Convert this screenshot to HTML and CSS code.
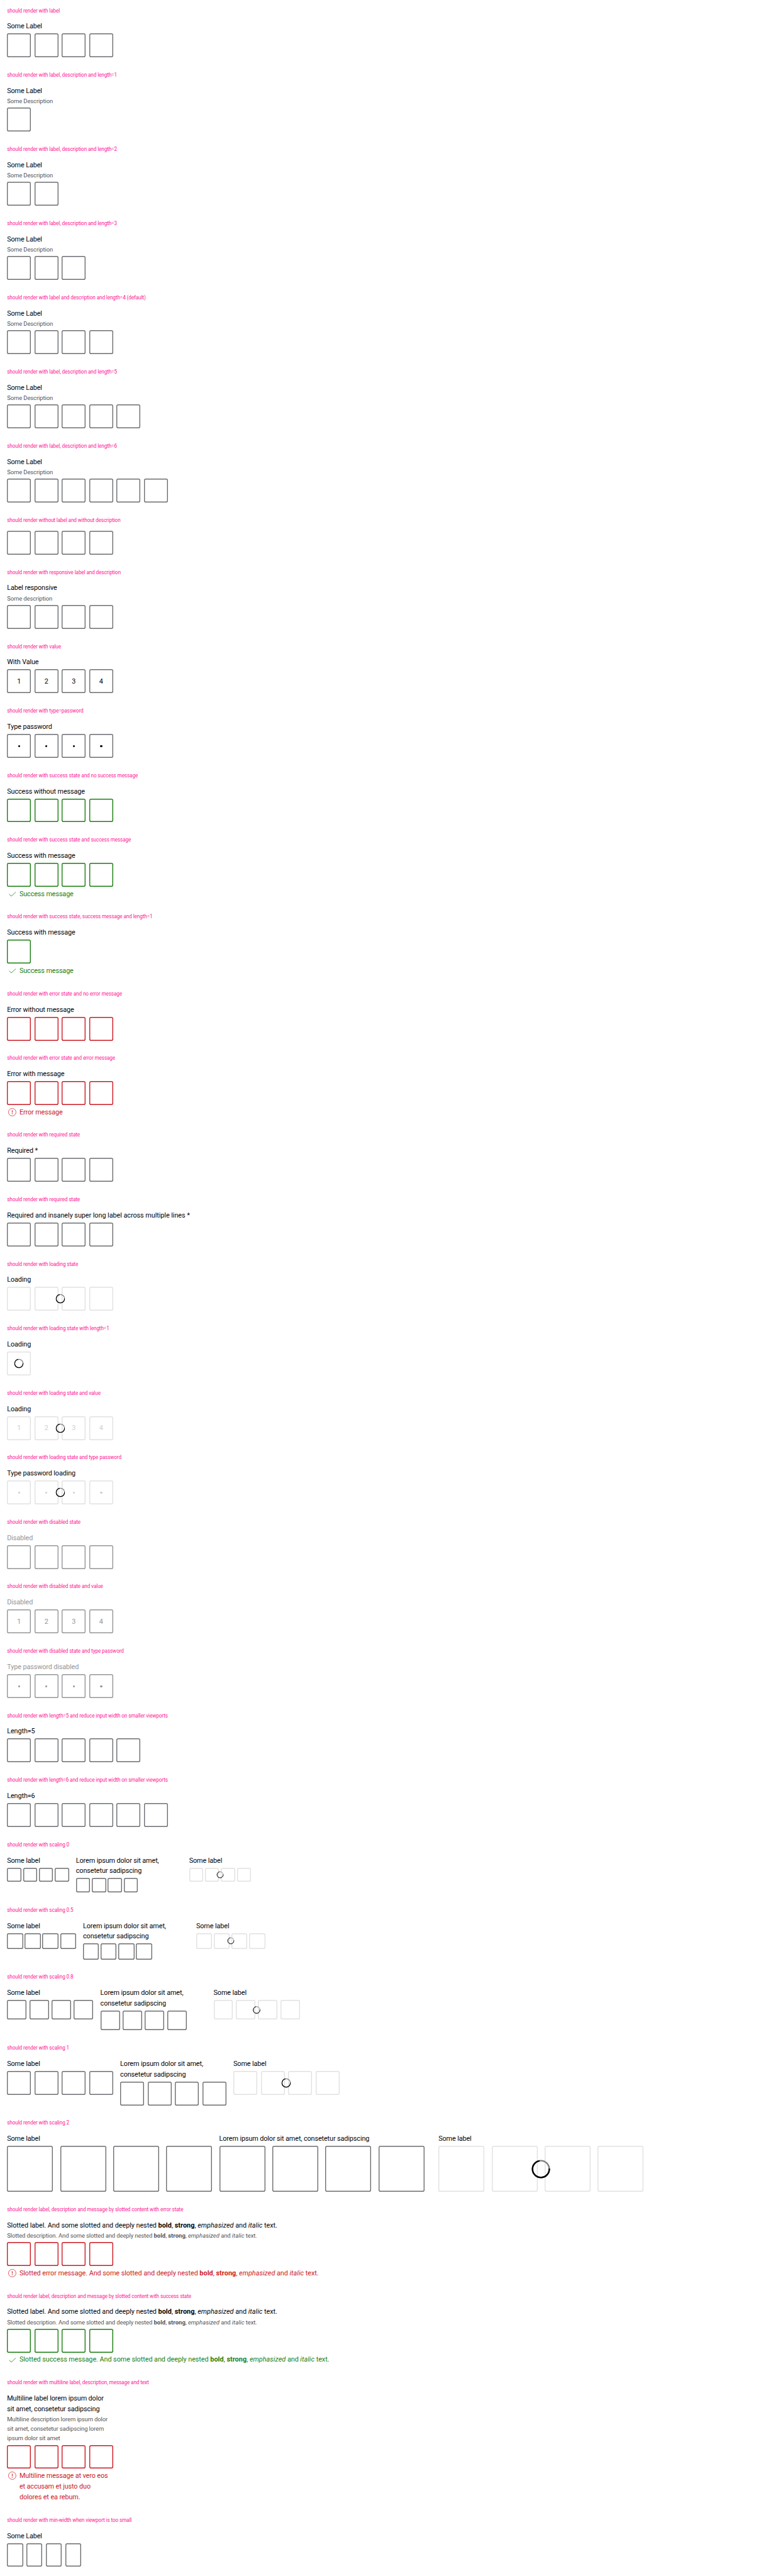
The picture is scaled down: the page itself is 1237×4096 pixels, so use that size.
FILE: index.html
```
<!DOCTYPE html>
<html lang="en">
<head>
<meta charset="utf-8">
<title>Pin code</title>
<link rel="stylesheet" href="styles.css">
</head>
<body>
<svg class="defs" width="0" height="0">
  <symbol id="check" viewBox="0 0 24 24"><path d="M5 12.4 10 17 20 7.8" fill="none" stroke="currentColor" stroke-width="1.1"/></symbol>
  <symbol id="alert" viewBox="0 0 24 24"><circle cx="12" cy="12" r="8.5" fill="none" stroke="currentColor"/><path d="M11.1 7.7h1.8l-.3 5.6h-1.2zM11.1 14.6h1.8v1.8h-1.8z" fill="currentColor"/></symbol>
  <symbol id="spinner" viewBox="0 0 48 48"><circle cx="24" cy="24" r="19" fill="none" stroke="#7e7f82" stroke-width="3.4"/><path d="M42.95 22.67A19 19 0 1 1 21.03 5.23" fill="none" stroke="#010205" stroke-width="3.4"/></symbol>
</svg>
<main class="page">
<section><h2>should render with label</h2><p class="label">Some Label</p><div class="pins"><i></i><i></i><i></i><i></i></div></section>
<section><h2>should render with label, description and length=1</h2><p class="label">Some Label</p><p class="desc">Some Description</p><div class="pins"><i></i></div></section>
<section><h2>should render with label, description and length=2</h2><p class="label">Some Label</p><p class="desc">Some Description</p><div class="pins"><i></i><i></i></div></section>
<section><h2>should render with label, description and length=3</h2><p class="label">Some Label</p><p class="desc">Some Description</p><div class="pins"><i></i><i></i><i></i></div></section>
<section><h2>should render with label and description and length=4 (default)</h2><p class="label">Some Label</p><p class="desc">Some Description</p><div class="pins"><i></i><i></i><i></i><i></i></div></section>
<section><h2>should render with label, description and length=5</h2><p class="label">Some Label</p><p class="desc">Some Description</p><div class="pins"><i></i><i></i><i></i><i></i><i></i></div></section>
<section><h2>should render with label, description and length=6</h2><p class="label">Some Label</p><p class="desc">Some Description</p><div class="pins"><i></i><i></i><i></i><i></i><i></i><i></i></div></section>
<section><h2>should render without label and without description</h2><div class="pins bare"><i></i><i></i><i></i><i></i></div></section>
<section><h2>should render with responsive label and description</h2><p class="label">Label responsive</p><p class="desc">Some description</p><div class="pins"><i></i><i></i><i></i><i></i></div></section>
<section><h2>should render with value</h2><p class="label">With Value</p><div class="pins"><i>1</i><i>2</i><i>3</i><i>4</i></div></section>
<section><h2>should render with type=password</h2><p class="label">Type password</p><div class="pins"><i><b></b></i><i><b></b></i><i><b></b></i><i><b></b></i></div></section>
<section class="success"><h2>should render with success state and no success message</h2><p class="label">Success without message</p><div class="pins"><i></i><i></i><i></i><i></i></div></section>
<section class="success"><h2>should render with success state and success message</h2><p class="label">Success with message</p><div class="pins"><i></i><i></i><i></i><i></i></div><div class="message"><svg><use href="#check"/></svg><span>Success message</span></div></section>
<section class="success"><h2>should render with success state, success message and length=1</h2><p class="label">Success with message</p><div class="pins"><i></i></div><div class="message"><svg><use href="#check"/></svg><span>Success message</span></div></section>
<section class="error"><h2>should render with error state and no error message</h2><p class="label">Error without message</p><div class="pins"><i></i><i></i><i></i><i></i></div></section>
<section class="error"><h2>should render with error state and error message</h2><p class="label">Error with message</p><div class="pins"><i></i><i></i><i></i><i></i></div><div class="message"><svg><use href="#alert"/></svg><span>Error message</span></div></section>
<section><h2>should render with required state</h2><p class="label">Required *</p><div class="pins"><i></i><i></i><i></i><i></i></div></section>
<section><h2>should render with required state</h2><p class="label long">Required and insanely super long label across multiple lines *</p><div class="pins"><i></i><i></i><i></i><i></i></div></section>
<section class="loading"><h2>should render with loading state</h2><p class="label">Loading</p><div class="pins"><i></i><i></i><i></i><i></i><svg class="spinner"><use href="#spinner"/></svg></div></section>
<section class="loading"><h2>should render with loading state with length=1</h2><p class="label">Loading</p><div class="pins"><i></i><svg class="spinner"><use href="#spinner"/></svg></div></section>
<section class="loading"><h2>should render with loading state and value</h2><p class="label">Loading</p><div class="pins"><i>1</i><i>2</i><i>3</i><i>4</i><svg class="spinner"><use href="#spinner"/></svg></div></section>
<section class="loading"><h2>should render with loading state and type password</h2><p class="label">Type password loading</p><div class="pins"><i><b></b></i><i><b></b></i><i><b></b></i><i><b></b></i><svg class="spinner"><use href="#spinner"/></svg></div></section>
<section class="disabled"><h2>should render with disabled state</h2><p class="label">Disabled</p><div class="pins"><i></i><i></i><i></i><i></i></div></section>
<section class="disabled"><h2>should render with disabled state and value</h2><p class="label">Disabled</p><div class="pins"><i>1</i><i>2</i><i>3</i><i>4</i></div></section>
<section class="disabled"><h2>should render with disabled state and type password</h2><p class="label">Type password disabled</p><div class="pins"><i><b></b></i><i><b></b></i><i><b></b></i><i><b></b></i></div></section>
<section><h2>should render with length=5 and reduce input width on smaller viewports</h2><p class="label">Length=5</p><div class="pins"><i></i><i></i><i></i><i></i><i></i></div></section>
<section><h2>should render with length=6 and reduce input width on smaller viewports</h2><p class="label">Length=6</p><div class="pins"><i></i><i></i><i></i><i></i><i></i><i></i></div></section>
<section><h2>should render with scaling 0</h2>
  <div class="row scale-0">
    <div><p class="label">Some label</p><div class="pins"><i></i><i></i><i></i><i></i></div></div>
    <div class="wide"><p class="label">Lorem ipsum dolor sit amet,<br>consetetur sadipscing</p><div class="pins"><i></i><i></i><i></i><i></i></div></div>
    <div class="loading"><p class="label">Some label</p><div class="pins"><i></i><i></i><i></i><i></i><svg class="spinner"><use href="#spinner"/></svg></div></div>
  </div></section>
<section><h2>should render with scaling 0.5</h2>
  <div class="row scale-05">
    <div><p class="label">Some label</p><div class="pins"><i></i><i></i><i></i><i></i></div></div>
    <div class="wide"><p class="label">Lorem ipsum dolor sit amet,<br>consetetur sadipscing</p><div class="pins"><i></i><i></i><i></i><i></i></div></div>
    <div class="loading"><p class="label">Some label</p><div class="pins"><i></i><i></i><i></i><i></i><svg class="spinner"><use href="#spinner"/></svg></div></div>
  </div></section>
<section><h2>should render with scaling 0.8</h2>
  <div class="row scale-08">
    <div><p class="label">Some label</p><div class="pins"><i></i><i></i><i></i><i></i></div></div>
    <div class="wide"><p class="label">Lorem ipsum dolor sit amet,<br>consetetur sadipscing</p><div class="pins"><i></i><i></i><i></i><i></i></div></div>
    <div class="loading"><p class="label">Some label</p><div class="pins"><i></i><i></i><i></i><i></i><svg class="spinner"><use href="#spinner"/></svg></div></div>
  </div></section>
<section><h2>should render with scaling 1</h2>
  <div class="row">
    <div><p class="label">Some label</p><div class="pins"><i></i><i></i><i></i><i></i></div></div>
    <div class="wide"><p class="label">Lorem ipsum dolor sit amet,<br>consetetur sadipscing</p><div class="pins"><i></i><i></i><i></i><i></i></div></div>
    <div class="loading"><p class="label">Some label</p><div class="pins"><i></i><i></i><i></i><i></i><svg class="spinner"><use href="#spinner"/></svg></div></div>
  </div></section>
<section><h2>should render with scaling 2</h2>
  <div class="row scale-2">
    <div><p class="label">Some label</p><div class="pins"><i></i><i></i><i></i><i></i></div></div>
    <div class="wide"><p class="label">Lorem ipsum dolor sit amet, consetetur sadipscing</p><div class="pins"><i></i><i></i><i></i><i></i></div></div>
    <div class="loading"><p class="label">Some label</p><div class="pins"><i></i><i></i><i></i><i></i><svg class="spinner"><use href="#spinner"/></svg></div></div>
  </div></section>
<section class="error slotted"><h2>should render label, description and message by slotted content with error state</h2><p class="label">Slotted label. And some slotted and deeply nested <strong>bold</strong>, <strong>strong</strong>, <em>emphasized</em> and <em>italic</em> text.</p><p class="desc">Slotted description. And some slotted and deeply nested <strong>bold</strong>, <strong>strong</strong>, <em>emphasized</em> and <em>italic</em> text.</p><div class="pins"><i></i><i></i><i></i><i></i></div><div class="message"><svg><use href="#alert"/></svg><span>Slotted error message. And some slotted and deeply nested <strong>bold</strong>, <strong>strong</strong>, <em>emphasized</em> and <em>italic</em> text.</span></div></section>
<section class="success slotted"><h2>should render label, description and message by slotted content with success state</h2><p class="label">Slotted label. And some slotted and deeply nested <strong>bold</strong>, <strong>strong</strong>, <em>emphasized</em> and <em>italic</em> text.</p><p class="desc">Slotted description. And some slotted and deeply nested <strong>bold</strong>, <strong>strong</strong>, <em>emphasized</em> and <em>italic</em> text.</p><div class="pins"><i></i><i></i><i></i><i></i></div><div class="message"><svg><use href="#check"/></svg><span>Slotted success message. And some slotted and deeply nested <strong>bold</strong>, <strong>strong</strong>, <em>emphasized</em> and <em>italic</em> text.</span></div></section>
<section class="error"><h2>should render with multiline label, description, message and text</h2><p class="label">Multiline label lorem ipsum dolor<br>sit amet, consetetur sadipscing</p><p class="desc">Multiline description lorem ipsum dolor<br>sit amet, consetetur sadipscing lorem<br>ipsum dolor sit amet</p><div class="pins"><i></i><i></i><i></i><i></i></div><div class="message"><svg><use href="#alert"/></svg><span>Multiline message at vero eos<br>et accusam et justo duo<br>dolores et ea rebum.</span></div></section>
<section><h2>should render with min-width when viewport is too small</h2><p class="label">Some Label</p><div class="pins narrow"><i></i><i></i><i></i><i></i></div></section>
</main>
</body>
</html>
```
FILE: styles.css
```
html, body {
  margin: 0;
  background: #fff;
}
.defs { display: block; width: 0; height: 0; }

.page {
  zoom: .7029;
  font-family: Roboto, "Liberation Sans", sans-serif;
  color: #010205;
  --size: 54px;
  --gap: 8px;
  --spin: 24px;
  --line: #6b6d70;
}

section { padding: 16px; }
h2 {
  margin: 0 0 15.6px;
  padding-top: .4px;
  font-size: 11.6px;
  line-height: 16px;
  font-weight: 400;
  letter-spacing: -.13px;
  color: #ff1493;
  white-space: nowrap;
}

.label, .desc { margin: 0; white-space: nowrap; }
.label, .message {
  font-size: 15.4px;
  line-height: 24px;
  letter-spacing: -.14px;
}
.label, .message span {
  padding-top: 1px;
  margin-bottom: -1px;
}
.label.long { letter-spacing: -.06px; }
.desc {
  padding-bottom: .4px;
  font-size: 13.4px;
  line-height: 21.5px;
  letter-spacing: -.12px;
  color: #535457;
}

.pins {
  position: relative;
  display: flex;
  gap: var(--gap);
  width: max-content;
  margin-top: 4px;
}
.label + .pins { margin-top: 4px; }
.pins.bare { margin-top: 0; }
.pins i {
  display: flex;
  align-items: center;
  justify-content: center;
  width: var(--size);
  height: var(--size);
  box-shadow: inset 0 0 0 2px var(--line);
  border-radius: 4px;
  font-size: 15.4px;
  font-style: normal;
}
.pins b {
  width: 4.6px;
  height: 4.6px;
  margin-top: 2px;
  border-radius: 2px;
  background: currentColor;
}
.pins.narrow i { width: 36px; }

.spinner {
  position: absolute;
  top: 50%;
  left: 50%;
  width: var(--spin);
  height: var(--spin);
  transform: translate(-50%, -50%);
}

.message { display: flex; gap: 4px; margin-top: 4px; white-space: nowrap; }
.message svg { width: 24px; height: 24px; }

.slotted .label, .slotted .message { letter-spacing: -.07px; }
.slotted strong, .slotted em { letter-spacing: .1px; }
.slotted em { font-style: italic; }

.success { --line: #197e10; }
.success .message { color: #197e10; }
.error { --line: #cc1922; }
.error .message { color: #cc1922; }
.loading { --line: #e1e1e2; }
.loading i { color: #cfcfd0; }
.disabled { --line: #949598; }
.disabled .label, .disabled i { color: #949598; }

.row { display: flex; gap: 16px; align-items: flex-start; }
.wide { width: 240px; }
.scale-0 { --size: 32px; --gap: 4px; --spin: 17.4px; }
.scale-05 { --size: 36px; --gap: 4px; --spin: 17.4px; }
.scale-08 { --size: 44px; --gap: 6.4px; --spin: 19.2px; }
.scale-2 { --size: 104px; --gap: 16px; --spin: 48px; }
.scale-2 .wide { width: 480px; }
```
